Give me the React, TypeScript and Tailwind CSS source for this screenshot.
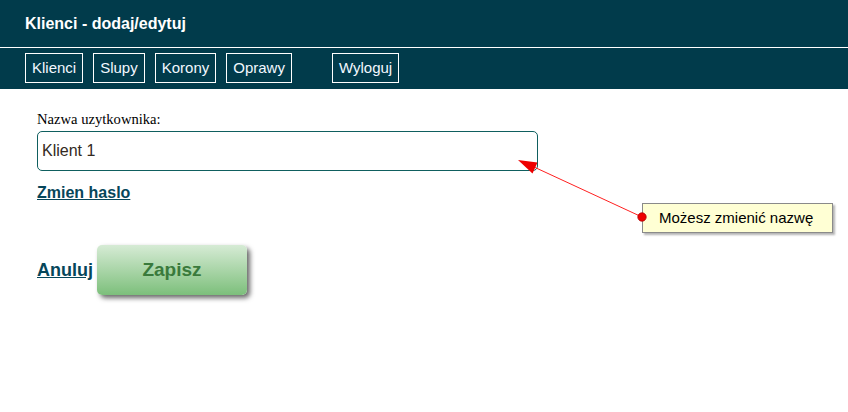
import React from "react";

const sans = { fontFamily: '"Liberation Sans", Arial, sans-serif' };

export default function App() {
  const navItems = ["Klienci", "Slupy", "Korony", "Oprawy"];
  return (
    <div className="relative w-[848px] h-[412px] bg-white overflow-hidden" style={sans}>
      <header className="h-[47px] bg-[#013b4b] flex items-center pl-[25px]">
        <h1 className="text-[16px] leading-[18px] font-bold text-white">Klienci - dodaj/edytuj</h1>
      </header>
      <div className="h-px bg-white" />
      <nav className="h-[41px] bg-[#013b4b] flex items-center pl-[25px] pb-px">
        {navItems.map((n) => (
          <a
            key={n}
            className="mr-[10px] border border-white px-[6px] py-[5px] text-[15px] leading-[18px] text-[#f2f8ff]"
          >
            {n}
          </a>
        ))}
        <a className="ml-[30px] border border-white px-[6px] py-[5px] text-[15px] leading-[18px] text-[#f2f8ff]">
          Wyloguj
        </a>
      </nav>

      <main className="pl-[37px] pt-[22px]">
        <label
          className="block text-[14.6px] leading-[17px] text-black"
          style={{ fontFamily: '"Liberation Serif", "Times New Roman", serif' }}
        >
          Nazwa uzytkownika:
        </label>
        <div className="mt-[3px] w-[501px] h-[40px] border-[1.5px] border-[#0f5f5f] rounded-[5px] flex items-center pl-[4px] text-[16px] text-[#332a22]">
          Klient 1
        </div>
        <div className="mt-[10px]">
          <a className="text-[16px] leading-[18px] font-bold underline text-[#06465a]">Zmien haslo</a>
        </div>
        <div className="mt-[40px] flex items-baseline">
          <a className="text-[18px] font-bold underline text-[#06465a] mr-[4px]">Anuluj</a>
          <button className="w-[150px] h-[50px] rounded-[5px] bg-gradient-to-b from-[#d6ebd5] to-[#7cbf7b] text-[19px] leading-[50px] font-bold text-[#3a7a3c] shadow-[3px_3px_5px_rgba(0,0,0,0.6)]">
            Zapisz
          </button>
        </div>
      </main>

      <svg className="absolute left-0 top-0 pointer-events-none" width="848" height="412">
        <line x1="642" y1="217" x2="534" y2="167" stroke="#ff2020" strokeWidth="1" />
        <polygon points="518,160 537.5,162.5 532.5,173.5" fill="#ee0000" />
      </svg>
      <div className="absolute left-[642px] top-[203px] w-[191px] h-[30px] bg-[#ffffd4] border border-[#8a8a8a] shadow-[2px_2px_2px_rgba(0,0,0,0.3)] flex items-center pl-[16px] text-[15px] text-black">
        Możesz zmienić nazwę
      </div>
      <svg className="absolute left-[637px] top-[212px]" width="10" height="10">
        <circle cx="5" cy="5" r="4.2" fill="#ee0000" stroke="#b00000" strokeWidth="0.8" />
      </svg>
    </div>
  );
}
